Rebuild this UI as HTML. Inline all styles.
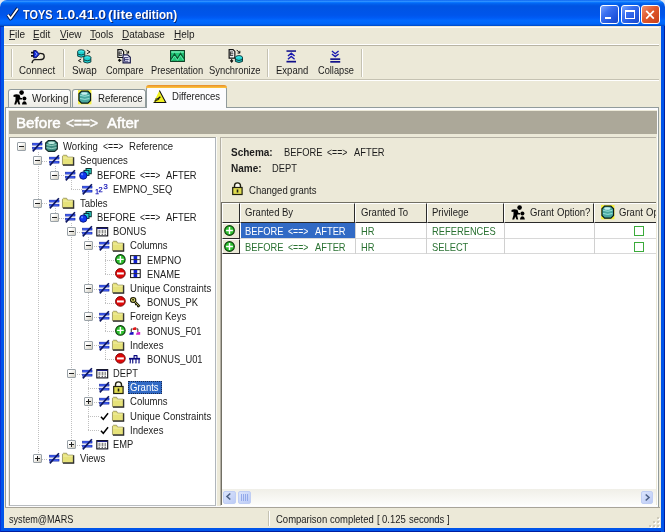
<!DOCTYPE html>
<html><head><meta charset="utf-8"><style>
*{margin:0;padding:0;box-sizing:border-box}
html,body{width:665px;height:532px;overflow:hidden;background:#dfe6f2}
body{position:relative;will-change:transform;font-family:"Liberation Sans",sans-serif;font-size:10px;color:#1c1c1c}
.a{position:absolute}
.t{position:absolute;white-space:pre;line-height:1}
svg.a{overflow:visible}
#title{left:0;top:0;width:665px;height:26.6px;border-radius:7px 7px 0 0;
 background:linear-gradient(to bottom,#0058ee 0%,#3593ff 4%,#288eff 6%,#127dff 8%,#036ffc 10%,#0262ee 14%,#0057e5 20%,#0054e3 24%,#0055eb 56%,#005bf5 66%,#026afe 76%,#0066fa 88%,#0058e0 93%,#0040b0 97%,#0030a0 100%)}
#frame{left:0;top:20px;width:665px;height:512px;background:#0055EA;border-left:1px solid #0831D9;border-right:1px solid #001EA0;border-bottom:1px solid #001EA0}
#client{left:4px;top:26px;width:657px;height:502px;background:#ECE9D8}
.cb{position:absolute;top:5px;width:19px;height:19px;border:1px solid #fff;border-radius:3px;
 background:linear-gradient(135deg,#7aa4ff 0%,#3a70f0 35%,#2258e0 70%,#1a48c8 100%)}
.cap{color:#fff;font-weight:bold;font-size:12.5px;text-shadow:1px 1px 0 #0a246a}
.sep{position:absolute;width:2px;border-left:1px solid #c5c2b2;border-right:1px solid #fff}
.tr{font-size:10px}
.dl{position:absolute;background:repeating-linear-gradient(to bottom,#c0c0c0 0 1px,transparent 1px 2px)}
.dh{position:absolute;height:1px;background:repeating-linear-gradient(to right,#c0c0c0 0 1px,transparent 1px 2px)}
.bx{position:absolute;width:9px;height:9px;border:1px solid #9aa2a8;border-radius:1px;background:linear-gradient(135deg,#fff 25%,#d0ccbe)}
</style></head><body>
<div id="frame" class="a"></div><div id="title" class="a"></div><div id="client" class="a"></div>
<svg class="a" style="left:6px;top:7px;width:13px;height:13px" viewBox="0 0 13 13"><path d="M1.8 7.8 L4.6 11.6 L11.8 1.4" stroke="#061440" stroke-width="3.6" fill="none" stroke-linejoin="round"/><path d="M1.8 7.8 L4.6 11.6 L11.8 1.4" stroke="#fff" stroke-width="1.8" fill="none" stroke-linejoin="round"/></svg>
<div class="t cap" style="left:23.3px;top:9px;font-size:12.8px;transform:scaleX(0.85);transform-origin:0 0">TOYS</div>
<div class="t cap" style="left:55.6px;top:9px;font-size:12.8px;transform:scaleX(1.08);transform-origin:0 0">1.0.41.0</div>
<div class="t cap" style="left:108px;top:9px;font-size:12.8px;transform:scaleX(1.09);transform-origin:0 0">(lite</div>
<div class="t cap" style="left:134.6px;top:9px;font-size:12.8px;transform:scaleX(0.91);transform-origin:0 0">edition)</div>
<div class="cb" style="left:600px"></div><div class="cb" style="left:621px"></div>
<div class="cb" style="left:641px;background:linear-gradient(135deg,#f09070 0%,#e0582c 45%,#c8401a 100%)"></div>
<div class="a" style="left:605px;top:16.8px;width:6px;height:2.6px;background:#fff"></div>
<div class="a" style="left:625px;top:9.6px;width:10px;height:9.8px;border:1.2px solid #fff;border-top:2.4px solid #fff"></div>
<svg class="a" style="left:645px;top:10px;width:10px;height:9.5px" viewBox="0 0 10 10"><path d="M1 1 L9 9 M9 1 L1 9" stroke="#fff" stroke-width="1.8"/></svg>
<div class="a" style="left:4px;top:26.6px;width:657px;height:1px;background:#fbfaf6"></div>
<div class="a" style="left:4px;top:44.2px;width:657px;height:1px;background:#fff"></div>
<div class="a" style="left:4px;top:45.3px;width:657px;height:1px;background:#b8b4a4"></div>
<div class="t" style="left:9px;top:30px">File</div>
<div class="a" style="left:9.3px;top:39.2px;width:5.5px;height:1px;background:#303030"></div>
<div class="t" style="left:33px;top:30px">Edit</div>
<div class="a" style="left:33.3px;top:39.2px;width:6px;height:1px;background:#303030"></div>
<div class="t" style="left:60px;top:30px">View</div>
<div class="a" style="left:60.3px;top:39.2px;width:6.5px;height:1px;background:#303030"></div>
<div class="t" style="left:90px;top:30px">Tools</div>
<div class="a" style="left:90.3px;top:39.2px;width:6px;height:1px;background:#303030"></div>
<div class="t" style="left:122px;top:30px">Database</div>
<div class="a" style="left:122.3px;top:39.2px;width:6.5px;height:1px;background:#303030"></div>
<div class="t" style="left:174px;top:30px">Help</div>
<div class="a" style="left:174.3px;top:39.2px;width:6.5px;height:1px;background:#303030"></div>
<div class="a" style="left:4px;top:79px;width:656px;height:1px;background:#c5c2b2"></div>
<div class="a" style="left:4px;top:80px;width:656px;height:1px;background:#fff"></div>
<div class="sep" style="left:11px;top:49px;height:28px"></div>
<div class="sep" style="left:63px;top:49px;height:28px"></div>
<div class="sep" style="left:267px;top:49px;height:28px"></div>
<div class="sep" style="left:361px;top:49px;height:28px"></div>
<div class="t" style="left:19.20px;top:65.66px;font-size:10.40px;transform:scaleX(0.9346);transform-origin:0 0">Connect</div>
<div class="t" style="left:71.70px;top:65.66px;font-size:10.40px;transform:scaleX(0.9519);transform-origin:0 0">Swap</div>
<div class="t" style="left:105.50px;top:65.66px;font-size:10.40px;transform:scaleX(0.8788);transform-origin:0 0">Compare</div>
<div class="t" style="left:151.20px;top:65.66px;font-size:10.40px;transform:scaleX(0.8923);transform-origin:0 0">Presentation</div>
<div class="t" style="left:209.40px;top:65.66px;font-size:10.40px;transform:scaleX(0.9019);transform-origin:0 0">Synchronize</div>
<div class="t" style="left:276.10px;top:65.66px;font-size:10.40px;transform:scaleX(0.9154);transform-origin:0 0">Expand</div>
<div class="t" style="left:317.50px;top:65.66px;font-size:10.40px;transform:scaleX(0.8875);transform-origin:0 0">Collapse</div>
<svg class="a" style="left:30.50px;top:50.20px;width:14px;height:14px" viewBox="0 0 14 14"><path d="M0 2.6 H3 M0 5.8 H3" stroke="#101010" stroke-width="1.7"/>
 <path d="M2.6 0.6 L5.2 0.6 L8.4 4.2 L5.2 7.8 L2.6 7.8 Z" fill="#1028d8" stroke="#06064a" stroke-width="0.9"/>
 <path d="M4.2 2.4 L6.2 4.2 L4.2 6" stroke="#a8c0ff" stroke-width="0.9" fill="none"/>
 <path d="M8.2 3.4 Q13.2 3 13.2 6.4 Q13.2 9.6 8.6 9.6 L3.6 9.6 Q1.6 9.9 1 13.2" stroke="#181818" stroke-width="1.4" fill="none"/></svg>
<svg class="a" style="left:76.50px;top:49.00px;width:15px;height:15.2px" viewBox="0 0 16 16"><g stroke="#0a3030" stroke-width="0.9">
 <ellipse cx="4.5" cy="2.7" rx="3.8" ry="2" fill="#40f0f0"/>
 <path d="M0.7 2.7 V7.5 Q4.5 9.8 8.3 7.5 V2.7" fill="#20d0d0"/>
 <path d="M0.7 5.2 Q4.5 7.4 8.3 5.2" fill="none"/>
 <ellipse cx="11" cy="9" rx="3.8" ry="2" fill="#40f0f0"/>
 <path d="M7.2 9 V13.8 Q11 16 14.8 13.8 V9" fill="#20d0d0"/>
 <path d="M7.2 11.4 Q11 13.6 14.8 11.4" fill="none"/>
 </g>
 <path d="M10.5 1 L14 3 L10.5 5" stroke="#101010" stroke-width="1" fill="none"/>
 <path d="M4.5 10.5 L1.5 12.3 L4.5 14" stroke="#101010" stroke-width="1" fill="none"/></svg>
<svg class="a" style="left:116.50px;top:49.30px;width:15px;height:14.5px" viewBox="0 0 16 16"><path d="M0.7 0.7 H5 L7 2.7 V9.4 H0.7 Z" fill="#fff" stroke="#101010" stroke-width="1.3"/>
 <path d="M2 3.3 H5.2 M2 5.3 H5.4 M2 7.3 H5.2 M2 3 V7.6" stroke="#202020" stroke-width="1"/>
 <path d="M6.4 6.4 H11.5 L14.4 9.2 V15.4 H6.4 Z" fill="#f0f0ff" stroke="#18184a" stroke-width="1.3"/>
 <path d="M8 9.5 H12.4 M8 11.5 H12.6 M8 13.5 H12.2 M8 9.3 V13.8" stroke="#2a2a6a" stroke-width="1"/>
 <path d="M9 1 L12.5 4.5 M12.5 2 V4.5 H10" stroke="#101010" stroke-width="1.1" fill="none"/>
 <path d="M4.5 12.5 H1.5 M3 11 L1.5 12.5 L3 14" stroke="#101010" stroke-width="1.3" fill="none"/></svg>
<svg class="a" style="left:170.00px;top:50.30px;width:15px;height:12px" viewBox="0 0 15 12"><rect x="0.6" y="0.6" width="13.8" height="10.8" fill="#20c878" stroke="#0a3a20" stroke-width="1.1"/>
 <rect x="1.2" y="1.2" width="12.6" height="1.6" fill="#70e8b0"/>
 <path d="M1 9.5 L4.5 4 L7.5 8.5 L10.5 3.5 L14 8.5" stroke="#0a5a30" stroke-width="1.3" fill="none"/>
 <path d="M1.5 10.5 L4.5 6 L7.5 10.3 L10.5 5.5 L13.5 10.3" stroke="#80f0c0" stroke-width="0.7" fill="none"/></svg>
<svg class="a" style="left:227.50px;top:49.30px;width:15.5px;height:14.5px" viewBox="0 0 16 16"><path d="M0.7 0.7 H5 L7 2.7 V10 H0.7 Z" fill="#fff" stroke="#101010" stroke-width="1.3"/>
 <path d="M2 3.3 H5.2 M2 5.3 H5.4 M2 7.3 H5.2 M2 3 V7.6" stroke="#202020" stroke-width="1"/>
 <path d="M9 1 L12.5 4.5 M12.5 2 V4.5 H10" stroke="#101010" stroke-width="1.1" fill="none"/>
 <path d="M3.5 11 V13.5 M2 12.5 L3.5 14.5 L5 12.5" stroke="#101010" stroke-width="1.2" fill="none"/>
 <g stroke="#062a2a" stroke-width="1">
 <ellipse cx="11.5" cy="9.3" rx="3.9" ry="2" fill="#40f0f0"/>
 <path d="M7.6 9.3 V13.8 Q11.5 16 15.4 13.8 V9.3" fill="#20d0d0"/>
 <path d="M7.6 11.6 Q11.5 13.7 15.4 11.6" fill="none"/>
 </g></svg>
<svg class="a" style="left:285.80px;top:50.00px;width:10.5px;height:13px" viewBox="0 0 11 13"><rect x="0.5" y="0" width="10" height="1.6" fill="#10108a"/>
 <rect x="0.5" y="11" width="10" height="1.8" fill="#10108a"/>
 <path d="M2 6 L5.5 3 L9 6 M2 9.5 L5.5 6.5 L9 9.5" stroke="#1818b0" stroke-width="1.4" fill="none"/></svg>
<svg class="a" style="left:329.60px;top:50.00px;width:10.5px;height:13px" viewBox="0 0 11 13"><rect x="0.3" y="8.4" width="10.4" height="1.7" fill="#10108a"/>
 <rect x="0.3" y="11.2" width="10.4" height="1.8" fill="#10108a"/>
 <path d="M2 0.8 L5.5 3.6 L9 0.8 M2 3.8 L5.5 6.6 L9 3.8" stroke="#1818b0" stroke-width="1.4" fill="none"/></svg>
<div class="a" style="left:5px;top:107px;width:654px;height:401px;border:1px solid #919b9c;background:#fcfcfe"></div>
<div class="a" style="left:8px;top:110px;width:649px;height:396px;background:#ECE9D8"></div>
<div class="a" style="left:8px;top:88.6px;width:63px;height:18.4px;border:1px solid #919b9c;border-bottom:none;border-radius:3px 3px 0 0;background:linear-gradient(#fff,#ecebe5)"></div>
<div class="a" style="left:72px;top:88.6px;width:74px;height:18.4px;border:1px solid #919b9c;border-bottom:none;border-radius:3px 3px 0 0;background:linear-gradient(#fff,#ecebe5)"></div>
<div class="a" style="left:146px;top:86px;width:81px;height:22px;border:1px solid #919b9c;border-bottom:none;border-radius:3px 3px 0 0;background:#fcfcfe"></div>
<div class="a" style="left:146px;top:85.4px;width:81px;height:3px;border-radius:3px 3px 0 0;background:linear-gradient(#e68b2c,#ffc83c)"></div>
<svg class="a" style="left:13.00px;top:90.00px;width:14px;height:15px" viewBox="0 0 14 15"><circle cx="8.6" cy="2.6" r="2.3" fill="#000"/>
 <path d="M0.5 5 Q3 3.8 6.5 4.8 L7.5 8 H9 V9.5 H6.5 L6.2 10.5 L7.2 14.5 H5.5 L4.2 11.5 L3.2 14.5 H1.2 L2.5 10 V6.8 L0.6 7 Z" fill="#000"/>
 <circle cx="11.4" cy="8.6" r="2" fill="#000"/>
 <path d="M9 14.5 Q9.2 11.5 11.4 11.3 Q13.6 11.5 13.8 14.5 Z" fill="#000"/></svg>
<svg class="a" style="left:77.80px;top:90.30px;width:13.5px;height:14.3px" viewBox="0 0 15 16"><rect x="0" y="0" width="15" height="16" fill="#f4f040"/>
 <path d="M4 1.3 H11 L14 4.3 V11.7 L11 14.7 H4 L1 11.7 V4.3 Z" fill="#48a8a0" stroke="#0a1a1a" stroke-width="1.3"/>
 <path d="M2.3 6 Q7.5 8 12.7 6 M2.3 9.5 Q7.5 11.5 12.7 9.5" stroke="#b0f0e8" stroke-width="0.9" fill="none"/>
 <ellipse cx="7" cy="3.8" rx="3.5" ry="1.4" fill="#c8f0f0"/></svg>
<svg class="a" style="left:153.00px;top:89.50px;width:13.8px;height:13.3px" viewBox="0 0 14 14"><path d="M6.5 0.5 L13.2 13.2 L0.3 13.2 Z" fill="#f0f020"/>
 <path d="M6.5 0.5 L13.2 13.2 L0.3 13.2" stroke="#101010" stroke-width="1.1" fill="none"/>
 <path d="M1.5 12 L7.5 7" stroke="#101010" stroke-width="1.4"/>
 <rect x="2.2" y="8.8" width="3" height="2.2" fill="#505020"/>
 <circle cx="5.5" cy="9.3" r="1" fill="#101010"/></svg>
<div class="t" style="left:31.60px;top:93.66px;font-size:10.40px;transform:scaleX(0.9615);transform-origin:0 0">Working</div>
<div class="t" style="left:97.60px;top:93.66px;font-size:10.40px;transform:scaleX(0.9317);transform-origin:0 0">Reference</div>
<div class="t" style="left:172.00px;top:91.66px;font-size:10.40px;transform:scaleX(0.9192);transform-origin:0 0">Differences</div>
<div class="a" style="left:8.5px;top:110.6px;width:648px;height:23.8px;background:#ACA899"></div>
<div class="t" style="left:15.6px;top:115.6px;font-size:14.6px;color:#fff;-webkit-text-stroke:0.5px #fff;transform:scaleX(1.04);transform-origin:0 0">Before</div>
<div class="t" style="left:66.4px;top:115.6px;font-size:14.6px;color:#fff;-webkit-text-stroke:0.5px #fff;transform:scaleX(0.94);transform-origin:0 0">&lt;==&gt;</div>
<div class="t" style="left:107px;top:115.6px;font-size:14.6px;color:#fff;-webkit-text-stroke:0.5px #fff;transform:scaleX(1.03);transform-origin:0 0">After</div>
<div class="a" style="left:9px;top:137px;width:206.5px;height:369px;border:1px solid #a0a09a;border-right-color:#b0b6bc;border-bottom-color:#b8bcc0;background:#fff"></div>
<div class="a" style="left:215.5px;top:137px;width:1px;height:369px;background:#fafaf6"></div>
<div class="dl" style="left:37.8px;top:151.7px;width:1px;height:307.0px"></div>
<div class="dl" style="left:54.6px;top:165.9px;width:1px;height:9.2px"></div>
<div class="dh" style="left:37.8px;top:160.9px;width:10.7px"></div>
<div class="dl" style="left:71.4px;top:180.1px;width:1px;height:9.2px"></div>
<div class="dh" style="left:54.6px;top:175.1px;width:10.7px"></div>
<div class="dh" style="left:71.4px;top:189.2px;width:10.7px"></div>
<div class="dl" style="left:54.6px;top:208.4px;width:1px;height:9.2px"></div>
<div class="dh" style="left:37.8px;top:203.4px;width:10.7px"></div>
<div class="dl" style="left:71.4px;top:222.6px;width:1px;height:221.9px"></div>
<div class="dh" style="left:54.6px;top:217.6px;width:10.7px"></div>
<div class="dl" style="left:88.2px;top:236.8px;width:1px;height:108.4px"></div>
<div class="dh" style="left:71.4px;top:231.8px;width:10.7px"></div>
<div class="dl" style="left:105.0px;top:251.0px;width:1px;height:23.4px"></div>
<div class="dh" style="left:88.2px;top:246.0px;width:10.7px"></div>
<div class="dh" style="left:105.0px;top:260.1px;width:10.7px"></div>
<div class="dh" style="left:105.0px;top:274.3px;width:10.7px"></div>
<div class="dl" style="left:105.0px;top:293.5px;width:1px;height:9.2px"></div>
<div class="dh" style="left:88.2px;top:288.5px;width:10.7px"></div>
<div class="dh" style="left:105.0px;top:302.7px;width:10.7px"></div>
<div class="dl" style="left:105.0px;top:321.9px;width:1px;height:9.2px"></div>
<div class="dh" style="left:88.2px;top:316.9px;width:10.7px"></div>
<div class="dh" style="left:105.0px;top:331.0px;width:10.7px"></div>
<div class="dl" style="left:105.0px;top:350.2px;width:1px;height:9.2px"></div>
<div class="dh" style="left:88.2px;top:345.2px;width:10.7px"></div>
<div class="dh" style="left:105.0px;top:359.4px;width:10.7px"></div>
<div class="dl" style="left:88.2px;top:378.6px;width:1px;height:51.7px"></div>
<div class="dh" style="left:71.4px;top:373.6px;width:10.7px"></div>
<div class="dh" style="left:88.2px;top:387.8px;width:10.7px"></div>
<div class="dh" style="left:88.2px;top:401.9px;width:10.7px"></div>
<div class="dh" style="left:88.2px;top:416.1px;width:10.7px"></div>
<div class="dh" style="left:88.2px;top:430.3px;width:10.7px"></div>
<div class="dh" style="left:71.4px;top:444.5px;width:10.7px"></div>
<div class="dh" style="left:37.8px;top:458.7px;width:10.7px"></div>
<div class="bx" style="left:16.60px;top:142.20px"></div>
<div class="a" style="left:18.60px;top:146.20px;width:5px;height:1px;background:#202020"></div>
<svg class="a" style="left:31.70px;top:141.20px;width:10.5px;height:10.5px" viewBox="0 0 12 12"><rect x="0.5" y="2.4" width="11" height="2.3" fill="#1838e8" stroke="#0a1a90" stroke-width="0.5"/>
 <rect x="1.2" y="3.2" width="9.6" height="0.6" fill="#8aa0ff"/>
 <rect x="0.5" y="7" width="11" height="2.3" fill="#1838e8" stroke="#0a1a90" stroke-width="0.5"/>
 <rect x="1.2" y="7.8" width="9.6" height="0.6" fill="#8aa0ff"/>
 <path d="M11.3 0.3 L0.9 11.8" stroke="#0a1460" stroke-width="1.9"/></svg>
<svg class="a" style="left:44.90px;top:140.30px;width:13px;height:12px" viewBox="0 0 14 13"><path d="M3.5 0.7 H10.5 L13.3 3.2 V9.8 L10.5 12.3 H3.5 L0.7 9.8 V3.2 Z" fill="#3c8c80" stroke="#142a28" stroke-width="1.3" stroke-linejoin="round"/>
 <path d="M1.6 5 Q7 7 12.4 5 M1.6 8.3 Q7 10.3 12.4 8.3" stroke="#a6dccc" stroke-width="1" fill="none"/>
 <ellipse cx="7" cy="3" rx="3.6" ry="1.4" fill="#c0ece0"/></svg>
<div class="t" style="left:63.00px;top:141.21px;font-size:10.70px;transform:scaleX(0.8925);transform-origin:0 0">Working</div><div class="t" style="left:102.55px;top:141.21px;font-size:10.70px;transform:scaleX(0.8131);transform-origin:0 0">&lt;==&gt;</div><div class="t" style="left:128.97px;top:141.21px;font-size:10.70px;transform:scaleX(0.8925);transform-origin:0 0">Reference</div>
<div class="bx" style="left:33.40px;top:156.38px"></div>
<div class="a" style="left:35.40px;top:160.38px;width:5px;height:1px;background:#202020"></div>
<svg class="a" style="left:48.50px;top:155.38px;width:10.5px;height:10.5px" viewBox="0 0 12 12"><rect x="0.5" y="2.4" width="11" height="2.3" fill="#1838e8" stroke="#0a1a90" stroke-width="0.5"/>
 <rect x="1.2" y="3.2" width="9.6" height="0.6" fill="#8aa0ff"/>
 <rect x="0.5" y="7" width="11" height="2.3" fill="#1838e8" stroke="#0a1a90" stroke-width="0.5"/>
 <rect x="1.2" y="7.8" width="9.6" height="0.6" fill="#8aa0ff"/>
 <path d="M11.3 0.3 L0.9 11.8" stroke="#0a1460" stroke-width="1.9"/></svg>
<svg class="a" style="left:61.70px;top:154.48px;width:13px;height:11.8px" viewBox="0 0 14 12"><path d="M0.5 2 L0.5 11 L12 11 L12 3 L6 3 L5 1 L1.5 1 Z" fill="#e6e27a" stroke="#8a8650" stroke-width="0.8"/>
 <path d="M12.6 3.2 L12.6 11.6 L1 11.6" stroke="#202020" stroke-width="1.2" fill="none"/>
 <path d="M1.3 4 L11.5 4" stroke="#f6f4b8" stroke-width="0.8"/></svg>
<div class="t" style="left:79.80px;top:155.39px;font-size:10.70px;transform:scaleX(0.8925);transform-origin:0 0">Sequences</div>
<div class="bx" style="left:50.20px;top:170.56px"></div>
<div class="a" style="left:52.20px;top:174.56px;width:5px;height:1px;background:#202020"></div>
<svg class="a" style="left:65.30px;top:169.56px;width:10.5px;height:10.5px" viewBox="0 0 12 12"><rect x="0.5" y="2.4" width="11" height="2.3" fill="#1838e8" stroke="#0a1a90" stroke-width="0.5"/>
 <rect x="1.2" y="3.2" width="9.6" height="0.6" fill="#8aa0ff"/>
 <rect x="0.5" y="7" width="11" height="2.3" fill="#1838e8" stroke="#0a1a90" stroke-width="0.5"/>
 <rect x="1.2" y="7.8" width="9.6" height="0.6" fill="#8aa0ff"/>
 <path d="M11.3 0.3 L0.9 11.8" stroke="#0a1460" stroke-width="1.9"/></svg>
<svg class="a" style="left:78.50px;top:168.26px;width:13px;height:12px" viewBox="0 0 14 13"><rect x="7.6" y="0.6" width="5.6" height="5.6" fill="#30e8d8" stroke="#062828" stroke-width="1.1"/>
 <rect x="5.4" y="2.6" width="5.4" height="5.4" fill="#28c8d0" stroke="#062838" stroke-width="1.1"/>
 <circle cx="4.6" cy="8.2" r="4" fill="#1038f0" stroke="#000a70" stroke-width="0.9"/>
 <circle cx="3.3" cy="6.9" r="1.2" fill="#6a90ff"/></svg>
<div class="t" style="left:96.60px;top:169.57px;font-size:10.70px;transform:scaleX(0.8738);transform-origin:0 0">BEFORE</div><div class="t" style="left:139.75px;top:169.57px;font-size:10.70px;transform:scaleX(0.8131);transform-origin:0 0">&lt;==&gt;</div><div class="t" style="left:166.17px;top:169.57px;font-size:10.70px;transform:scaleX(0.8738);transform-origin:0 0">AFTER</div>
<svg class="a" style="left:82.10px;top:183.74px;width:10.5px;height:10.5px" viewBox="0 0 12 12"><rect x="0.5" y="2.4" width="11" height="2.3" fill="#1838e8" stroke="#0a1a90" stroke-width="0.5"/>
 <rect x="1.2" y="3.2" width="9.6" height="0.6" fill="#8aa0ff"/>
 <rect x="0.5" y="7" width="11" height="2.3" fill="#1838e8" stroke="#0a1a90" stroke-width="0.5"/>
 <rect x="1.2" y="7.8" width="9.6" height="0.6" fill="#8aa0ff"/>
 <path d="M11.3 0.3 L0.9 11.8" stroke="#0a1460" stroke-width="1.9"/></svg>
<svg class="a" style="left:95.30px;top:182.24px;width:14px;height:14px" viewBox="0 0 14 14"><text x="0.2" y="12.2" font-family="Liberation Sans" font-size="6.6" fill="#1818b8" stroke="#1818b8" stroke-width="0.25">1</text>
 <text x="3.6" y="10.4" font-family="Liberation Sans" font-size="7.4" fill="#1818b8" stroke="#1818b8" stroke-width="0.25">2</text>
 <text x="8.4" y="6.9" font-family="Liberation Sans" font-size="7.6" fill="#1818b8" stroke="#1818b8" stroke-width="0.25">3</text></svg>
<div class="t" style="left:113.40px;top:183.75px;font-size:10.70px;transform:scaleX(0.8738);transform-origin:0 0">EMPNO_SEQ</div>
<div class="bx" style="left:33.40px;top:198.92px"></div>
<div class="a" style="left:35.40px;top:202.92px;width:5px;height:1px;background:#202020"></div>
<svg class="a" style="left:48.50px;top:197.92px;width:10.5px;height:10.5px" viewBox="0 0 12 12"><rect x="0.5" y="2.4" width="11" height="2.3" fill="#1838e8" stroke="#0a1a90" stroke-width="0.5"/>
 <rect x="1.2" y="3.2" width="9.6" height="0.6" fill="#8aa0ff"/>
 <rect x="0.5" y="7" width="11" height="2.3" fill="#1838e8" stroke="#0a1a90" stroke-width="0.5"/>
 <rect x="1.2" y="7.8" width="9.6" height="0.6" fill="#8aa0ff"/>
 <path d="M11.3 0.3 L0.9 11.8" stroke="#0a1460" stroke-width="1.9"/></svg>
<svg class="a" style="left:61.70px;top:197.02px;width:13px;height:11.8px" viewBox="0 0 14 12"><path d="M0.5 2 L0.5 11 L12 11 L12 3 L6 3 L5 1 L1.5 1 Z" fill="#e6e27a" stroke="#8a8650" stroke-width="0.8"/>
 <path d="M12.6 3.2 L12.6 11.6 L1 11.6" stroke="#202020" stroke-width="1.2" fill="none"/>
 <path d="M1.3 4 L11.5 4" stroke="#f6f4b8" stroke-width="0.8"/></svg>
<div class="t" style="left:79.80px;top:197.93px;font-size:10.70px;transform:scaleX(0.8925);transform-origin:0 0">Tables</div>
<div class="bx" style="left:50.20px;top:213.10px"></div>
<div class="a" style="left:52.20px;top:217.10px;width:5px;height:1px;background:#202020"></div>
<svg class="a" style="left:65.30px;top:212.10px;width:10.5px;height:10.5px" viewBox="0 0 12 12"><rect x="0.5" y="2.4" width="11" height="2.3" fill="#1838e8" stroke="#0a1a90" stroke-width="0.5"/>
 <rect x="1.2" y="3.2" width="9.6" height="0.6" fill="#8aa0ff"/>
 <rect x="0.5" y="7" width="11" height="2.3" fill="#1838e8" stroke="#0a1a90" stroke-width="0.5"/>
 <rect x="1.2" y="7.8" width="9.6" height="0.6" fill="#8aa0ff"/>
 <path d="M11.3 0.3 L0.9 11.8" stroke="#0a1460" stroke-width="1.9"/></svg>
<svg class="a" style="left:78.50px;top:210.80px;width:13px;height:12px" viewBox="0 0 14 13"><rect x="7.6" y="0.6" width="5.6" height="5.6" fill="#30e8d8" stroke="#062828" stroke-width="1.1"/>
 <rect x="5.4" y="2.6" width="5.4" height="5.4" fill="#28c8d0" stroke="#062838" stroke-width="1.1"/>
 <circle cx="4.6" cy="8.2" r="4" fill="#1038f0" stroke="#000a70" stroke-width="0.9"/>
 <circle cx="3.3" cy="6.9" r="1.2" fill="#6a90ff"/></svg>
<div class="t" style="left:96.60px;top:212.11px;font-size:10.70px;transform:scaleX(0.8738);transform-origin:0 0">BEFORE</div><div class="t" style="left:139.75px;top:212.11px;font-size:10.70px;transform:scaleX(0.8131);transform-origin:0 0">&lt;==&gt;</div><div class="t" style="left:166.17px;top:212.11px;font-size:10.70px;transform:scaleX(0.8738);transform-origin:0 0">AFTER</div>
<div class="bx" style="left:67.00px;top:227.28px"></div>
<div class="a" style="left:69.00px;top:231.28px;width:5px;height:1px;background:#202020"></div>
<svg class="a" style="left:82.10px;top:226.28px;width:10.5px;height:10.5px" viewBox="0 0 12 12"><rect x="0.5" y="2.4" width="11" height="2.3" fill="#1838e8" stroke="#0a1a90" stroke-width="0.5"/>
 <rect x="1.2" y="3.2" width="9.6" height="0.6" fill="#8aa0ff"/>
 <rect x="0.5" y="7" width="11" height="2.3" fill="#1838e8" stroke="#0a1a90" stroke-width="0.5"/>
 <rect x="1.2" y="7.8" width="9.6" height="0.6" fill="#8aa0ff"/>
 <path d="M11.3 0.3 L0.9 11.8" stroke="#0a1460" stroke-width="1.9"/></svg>
<svg class="a" style="left:95.80px;top:227.03px;width:12.5px;height:9.5px" viewBox="0 0 14 11"><rect x="0.7" y="0.7" width="12.6" height="9.6" fill="#fff" stroke="#101018" stroke-width="1.3"/>
 <rect x="1" y="1" width="12" height="1.3" fill="#1a1a80"/>
 <path d="M3.4 3.2 V7.4 M7 3.2 V7.4 M10.4 3.2 V7.4" stroke="#303030" stroke-width="0.9"/>
 <path d="M5 3.2 V7.4 M8.6 3.2 V7.4" stroke="#c8c8c0" stroke-width="1"/>
 <path d="M2.8 8.6 H4 M6.4 8.6 H7.6 M9.8 8.6 H11" stroke="#202020" stroke-width="1.1"/></svg>
<div class="t" style="left:113.40px;top:226.29px;font-size:10.70px;transform:scaleX(0.8738);transform-origin:0 0">BONUS</div>
<div class="bx" style="left:83.80px;top:241.46px"></div>
<div class="a" style="left:85.80px;top:245.46px;width:5px;height:1px;background:#202020"></div>
<svg class="a" style="left:98.90px;top:240.46px;width:10.5px;height:10.5px" viewBox="0 0 12 12"><rect x="0.5" y="2.4" width="11" height="2.3" fill="#1838e8" stroke="#0a1a90" stroke-width="0.5"/>
 <rect x="1.2" y="3.2" width="9.6" height="0.6" fill="#8aa0ff"/>
 <rect x="0.5" y="7" width="11" height="2.3" fill="#1838e8" stroke="#0a1a90" stroke-width="0.5"/>
 <rect x="1.2" y="7.8" width="9.6" height="0.6" fill="#8aa0ff"/>
 <path d="M11.3 0.3 L0.9 11.8" stroke="#0a1460" stroke-width="1.9"/></svg>
<svg class="a" style="left:112.10px;top:239.56px;width:13px;height:11.8px" viewBox="0 0 14 12"><path d="M0.5 2 L0.5 11 L12 11 L12 3 L6 3 L5 1 L1.5 1 Z" fill="#e6e27a" stroke="#8a8650" stroke-width="0.8"/>
 <path d="M12.6 3.2 L12.6 11.6 L1 11.6" stroke="#202020" stroke-width="1.2" fill="none"/>
 <path d="M1.3 4 L11.5 4" stroke="#f6f4b8" stroke-width="0.8"/></svg>
<div class="t" style="left:130.20px;top:240.47px;font-size:10.70px;transform:scaleX(0.8925);transform-origin:0 0">Columns</div>
<svg class="a" style="left:115.40px;top:253.94px;width:10.8px;height:10.8px" viewBox="0 0 12 12"><circle cx="6" cy="6" r="5.3" fill="#2cc02c" stroke="#0a3a0a" stroke-width="1.2"/>
 <path d="M6 2.3 V9.7 M2.3 6 H9.7" stroke="#fff" stroke-width="1.6"/></svg>
<svg class="a" style="left:130.20px;top:254.64px;width:10.8px;height:9.2px" viewBox="0 0 12 10"><rect x="0.6" y="0.6" width="10.8" height="8.8" fill="#fff" stroke="#202020" stroke-width="1.2"/>
 <rect x="4" y="1" width="4" height="8" fill="#1020d0"/>
 <path d="M1 5 H11" stroke="#303030" stroke-width="1"/></svg>
<div class="t" style="left:147.00px;top:254.65px;font-size:10.70px;transform:scaleX(0.8738);transform-origin:0 0">EMPNO</div>
<svg class="a" style="left:115.40px;top:268.12px;width:10.8px;height:10.8px" viewBox="0 0 12 12"><circle cx="6" cy="6" r="5.4" fill="#e00808" stroke="#700000" stroke-width="1"/>
 <rect x="2.2" y="4.9" width="7.6" height="2.3" fill="#fff"/></svg>
<svg class="a" style="left:130.20px;top:268.82px;width:10.8px;height:9.2px" viewBox="0 0 12 10"><rect x="0.6" y="0.6" width="10.8" height="8.8" fill="#fff" stroke="#202020" stroke-width="1.2"/>
 <rect x="4" y="1" width="4" height="8" fill="#1020d0"/>
 <path d="M1 5 H11" stroke="#303030" stroke-width="1"/></svg>
<div class="t" style="left:147.00px;top:268.83px;font-size:10.70px;transform:scaleX(0.8738);transform-origin:0 0">ENAME</div>
<div class="bx" style="left:83.80px;top:284.00px"></div>
<div class="a" style="left:85.80px;top:288.00px;width:5px;height:1px;background:#202020"></div>
<svg class="a" style="left:98.90px;top:283.00px;width:10.5px;height:10.5px" viewBox="0 0 12 12"><rect x="0.5" y="2.4" width="11" height="2.3" fill="#1838e8" stroke="#0a1a90" stroke-width="0.5"/>
 <rect x="1.2" y="3.2" width="9.6" height="0.6" fill="#8aa0ff"/>
 <rect x="0.5" y="7" width="11" height="2.3" fill="#1838e8" stroke="#0a1a90" stroke-width="0.5"/>
 <rect x="1.2" y="7.8" width="9.6" height="0.6" fill="#8aa0ff"/>
 <path d="M11.3 0.3 L0.9 11.8" stroke="#0a1460" stroke-width="1.9"/></svg>
<svg class="a" style="left:112.10px;top:282.10px;width:13px;height:11.8px" viewBox="0 0 14 12"><path d="M0.5 2 L0.5 11 L12 11 L12 3 L6 3 L5 1 L1.5 1 Z" fill="#e6e27a" stroke="#8a8650" stroke-width="0.8"/>
 <path d="M12.6 3.2 L12.6 11.6 L1 11.6" stroke="#202020" stroke-width="1.2" fill="none"/>
 <path d="M1.3 4 L11.5 4" stroke="#f6f4b8" stroke-width="0.8"/></svg>
<div class="t" style="left:130.20px;top:283.01px;font-size:10.70px;transform:scaleX(0.8925);transform-origin:0 0">Unique</div><div class="t" style="left:163.16px;top:283.01px;font-size:10.70px;transform:scaleX(0.8925);transform-origin:0 0">Constraints</div>
<svg class="a" style="left:115.40px;top:296.48px;width:10.8px;height:10.8px" viewBox="0 0 12 12"><circle cx="6" cy="6" r="5.4" fill="#e00808" stroke="#700000" stroke-width="1"/>
 <rect x="2.2" y="4.9" width="7.6" height="2.3" fill="#fff"/></svg>
<svg class="a" style="left:129.90px;top:296.98px;width:10.2px;height:10.2px" viewBox="0 0 10 10"><ellipse cx="3.1" cy="2.9" rx="2.6" ry="2.4" fill="#e4e070" stroke="#1a1a08" stroke-width="1.1"/>
 <circle cx="3" cy="2.7" r="0.9" fill="#1a1a08"/>
 <path d="M4.6 4.6 L9.4 9.4" stroke="#1a1a08" stroke-width="2.3"/>
 <path d="M4.8 4.8 L9 9" stroke="#e4e070" stroke-width="0.8"/>
 <rect x="5" y="6.6" width="1.5" height="1.5" fill="#1a1a08"/>
 <rect x="7" y="8.5" width="1.5" height="1.5" fill="#1a1a08"/></svg>
<div class="t" style="left:147.00px;top:297.19px;font-size:10.70px;transform:scaleX(0.8738);transform-origin:0 0">BONUS_PK</div>
<div class="bx" style="left:83.80px;top:312.36px"></div>
<div class="a" style="left:85.80px;top:316.36px;width:5px;height:1px;background:#202020"></div>
<svg class="a" style="left:98.90px;top:311.36px;width:10.5px;height:10.5px" viewBox="0 0 12 12"><rect x="0.5" y="2.4" width="11" height="2.3" fill="#1838e8" stroke="#0a1a90" stroke-width="0.5"/>
 <rect x="1.2" y="3.2" width="9.6" height="0.6" fill="#8aa0ff"/>
 <rect x="0.5" y="7" width="11" height="2.3" fill="#1838e8" stroke="#0a1a90" stroke-width="0.5"/>
 <rect x="1.2" y="7.8" width="9.6" height="0.6" fill="#8aa0ff"/>
 <path d="M11.3 0.3 L0.9 11.8" stroke="#0a1460" stroke-width="1.9"/></svg>
<svg class="a" style="left:112.10px;top:310.46px;width:13px;height:11.8px" viewBox="0 0 14 12"><path d="M0.5 2 L0.5 11 L12 11 L12 3 L6 3 L5 1 L1.5 1 Z" fill="#e6e27a" stroke="#8a8650" stroke-width="0.8"/>
 <path d="M12.6 3.2 L12.6 11.6 L1 11.6" stroke="#202020" stroke-width="1.2" fill="none"/>
 <path d="M1.3 4 L11.5 4" stroke="#f6f4b8" stroke-width="0.8"/></svg>
<div class="t" style="left:130.20px;top:311.37px;font-size:10.70px;transform:scaleX(0.8925);transform-origin:0 0">Foreign</div><div class="t" style="left:165.28px;top:311.37px;font-size:10.70px;transform:scaleX(0.8925);transform-origin:0 0">Keys</div>
<svg class="a" style="left:115.40px;top:324.84px;width:10.8px;height:10.8px" viewBox="0 0 12 12"><circle cx="6" cy="6" r="5.3" fill="#2cc02c" stroke="#0a3a0a" stroke-width="1.2"/>
 <path d="M6 2.3 V9.7 M2.3 6 H9.7" stroke="#fff" stroke-width="1.6"/></svg>
<svg class="a" style="left:129.30px;top:326.54px;width:11.6px;height:8.4px" viewBox="0 0 12 9"><path d="M3.6 2 H2.2 V5.5 M7.6 2 H9.3 V5.5" stroke="#202020" stroke-width="1" fill="none"/>
 <path d="M3.7 3.3 L4.2 1.2 Q5 0 7.5 0.3 V3.3 Z" fill="#e01818"/>
 <path d="M0 8.4 L0.7 6.2 Q1.8 5 4.7 5.3 V8.4 Z" fill="#1a10c0"/>
 <path d="M7.2 8.4 L7.9 6.2 Q9 5 11.8 5.3 V8.4 Z" fill="#d020c8"/></svg>
<div class="t" style="left:147.00px;top:325.55px;font-size:10.70px;transform:scaleX(0.8738);transform-origin:0 0">BONUS_F01</div>
<div class="bx" style="left:83.80px;top:340.72px"></div>
<div class="a" style="left:85.80px;top:344.72px;width:5px;height:1px;background:#202020"></div>
<svg class="a" style="left:98.90px;top:339.72px;width:10.5px;height:10.5px" viewBox="0 0 12 12"><rect x="0.5" y="2.4" width="11" height="2.3" fill="#1838e8" stroke="#0a1a90" stroke-width="0.5"/>
 <rect x="1.2" y="3.2" width="9.6" height="0.6" fill="#8aa0ff"/>
 <rect x="0.5" y="7" width="11" height="2.3" fill="#1838e8" stroke="#0a1a90" stroke-width="0.5"/>
 <rect x="1.2" y="7.8" width="9.6" height="0.6" fill="#8aa0ff"/>
 <path d="M11.3 0.3 L0.9 11.8" stroke="#0a1460" stroke-width="1.9"/></svg>
<svg class="a" style="left:112.10px;top:338.82px;width:13px;height:11.8px" viewBox="0 0 14 12"><path d="M0.5 2 L0.5 11 L12 11 L12 3 L6 3 L5 1 L1.5 1 Z" fill="#e6e27a" stroke="#8a8650" stroke-width="0.8"/>
 <path d="M12.6 3.2 L12.6 11.6 L1 11.6" stroke="#202020" stroke-width="1.2" fill="none"/>
 <path d="M1.3 4 L11.5 4" stroke="#f6f4b8" stroke-width="0.8"/></svg>
<div class="t" style="left:130.20px;top:339.73px;font-size:10.70px;transform:scaleX(0.8925);transform-origin:0 0">Indexes</div>
<svg class="a" style="left:115.40px;top:353.20px;width:10.8px;height:10.8px" viewBox="0 0 12 12"><circle cx="6" cy="6" r="5.4" fill="#e00808" stroke="#700000" stroke-width="1"/>
 <rect x="2.2" y="4.9" width="7.6" height="2.3" fill="#fff"/></svg>
<svg class="a" style="left:129.20px;top:354.80px;width:11.5px;height:8.6px" viewBox="0 0 12 9"><path d="M4.9 0.6 H8.7 M5.3 0.6 V3.5 M8.3 0.6 V3.5" stroke="#0a0a80" stroke-width="1.2" fill="none"/>
 <path d="M0 3.9 H11.6" stroke="#0a0a80" stroke-width="1.8"/>
 <path d="M1.3 4 V8.2 M3.9 4 V8.2 M7.3 4 V8.2 M10.5 4 V8.2" stroke="#0a0a80" stroke-width="1.2"/>
 <path d="M0.6 8.3 H1.8 M3.2 8.3 H4.4 M6.6 8.3 H7.8 M9.8 8.3 H11" stroke="#0a0a80" stroke-width="1"/></svg>
<div class="t" style="left:147.00px;top:353.91px;font-size:10.70px;transform:scaleX(0.8738);transform-origin:0 0">BONUS_U01</div>
<div class="bx" style="left:67.00px;top:369.08px"></div>
<div class="a" style="left:69.00px;top:373.08px;width:5px;height:1px;background:#202020"></div>
<svg class="a" style="left:82.10px;top:368.08px;width:10.5px;height:10.5px" viewBox="0 0 12 12"><rect x="0.5" y="2.4" width="11" height="2.3" fill="#1838e8" stroke="#0a1a90" stroke-width="0.5"/>
 <rect x="1.2" y="3.2" width="9.6" height="0.6" fill="#8aa0ff"/>
 <rect x="0.5" y="7" width="11" height="2.3" fill="#1838e8" stroke="#0a1a90" stroke-width="0.5"/>
 <rect x="1.2" y="7.8" width="9.6" height="0.6" fill="#8aa0ff"/>
 <path d="M11.3 0.3 L0.9 11.8" stroke="#0a1460" stroke-width="1.9"/></svg>
<svg class="a" style="left:95.80px;top:368.83px;width:12.5px;height:9.5px" viewBox="0 0 14 11"><rect x="0.7" y="0.7" width="12.6" height="9.6" fill="#fff" stroke="#101018" stroke-width="1.3"/>
 <rect x="1" y="1" width="12" height="1.3" fill="#1a1a80"/>
 <path d="M3.4 3.2 V7.4 M7 3.2 V7.4 M10.4 3.2 V7.4" stroke="#303030" stroke-width="0.9"/>
 <path d="M5 3.2 V7.4 M8.6 3.2 V7.4" stroke="#c8c8c0" stroke-width="1"/>
 <path d="M2.8 8.6 H4 M6.4 8.6 H7.6 M9.8 8.6 H11" stroke="#202020" stroke-width="1.1"/></svg>
<div class="t" style="left:113.40px;top:368.09px;font-size:10.70px;transform:scaleX(0.8738);transform-origin:0 0">DEPT</div>
<svg class="a" style="left:98.90px;top:382.26px;width:10.5px;height:10.5px" viewBox="0 0 12 12"><rect x="0.5" y="2.4" width="11" height="2.3" fill="#1838e8" stroke="#0a1a90" stroke-width="0.5"/>
 <rect x="1.2" y="3.2" width="9.6" height="0.6" fill="#8aa0ff"/>
 <rect x="0.5" y="7" width="11" height="2.3" fill="#1838e8" stroke="#0a1a90" stroke-width="0.5"/>
 <rect x="1.2" y="7.8" width="9.6" height="0.6" fill="#8aa0ff"/>
 <path d="M11.3 0.3 L0.9 11.8" stroke="#0a1460" stroke-width="1.9"/></svg>
<svg class="a" style="left:113.10px;top:381.26px;width:11px;height:13px" viewBox="0 0 11 13"><path d="M2.5 6 V3.8 Q2.5 0.9 5.5 0.9 Q8.5 0.9 8.5 3.8 V6" stroke="#202010" stroke-width="1.4" fill="#fdfcf0"/>
 <rect x="0.7" y="5.5" width="9.4" height="7" fill="#e0dc50" stroke="#202010" stroke-width="1.2"/>
 <rect x="4.7" y="7.5" width="1.6" height="3" fill="#202010"/></svg>
<div class="a" style="left:127.70px;top:380.66px;width:34px;height:13.8px;background:#316ac5;outline:1px dotted #1a2a50;outline-offset:-1px"></div>
<div class="t" style="left:130.20px;top:382.27px;font-size:10.70px;color:#fff;transform:scaleX(0.8925);transform-origin:0 0">Grants</div>
<div class="bx" style="left:83.80px;top:397.44px"></div>
<div class="a" style="left:85.80px;top:401.44px;width:5px;height:1px;background:#202020"></div>
<div class="a" style="left:87.80px;top:399.44px;width:1px;height:5px;background:#202020"></div>
<svg class="a" style="left:98.90px;top:396.44px;width:10.5px;height:10.5px" viewBox="0 0 12 12"><rect x="0.5" y="2.4" width="11" height="2.3" fill="#1838e8" stroke="#0a1a90" stroke-width="0.5"/>
 <rect x="1.2" y="3.2" width="9.6" height="0.6" fill="#8aa0ff"/>
 <rect x="0.5" y="7" width="11" height="2.3" fill="#1838e8" stroke="#0a1a90" stroke-width="0.5"/>
 <rect x="1.2" y="7.8" width="9.6" height="0.6" fill="#8aa0ff"/>
 <path d="M11.3 0.3 L0.9 11.8" stroke="#0a1460" stroke-width="1.9"/></svg>
<svg class="a" style="left:112.10px;top:395.54px;width:13px;height:11.8px" viewBox="0 0 14 12"><path d="M0.5 2 L0.5 11 L12 11 L12 3 L6 3 L5 1 L1.5 1 Z" fill="#e6e27a" stroke="#8a8650" stroke-width="0.8"/>
 <path d="M12.6 3.2 L12.6 11.6 L1 11.6" stroke="#202020" stroke-width="1.2" fill="none"/>
 <path d="M1.3 4 L11.5 4" stroke="#f6f4b8" stroke-width="0.8"/></svg>
<div class="t" style="left:130.20px;top:396.45px;font-size:10.70px;transform:scaleX(0.8925);transform-origin:0 0">Columns</div>
<svg class="a" style="left:99.90px;top:412.12px;width:9px;height:8.5px" viewBox="0 0 10 10"><path d="M0.8 5.5 L3.6 8.6 L9.2 1.5" stroke="#000" stroke-width="1.7" fill="none"/></svg>
<svg class="a" style="left:112.10px;top:409.72px;width:13px;height:11.8px" viewBox="0 0 14 12"><path d="M0.5 2 L0.5 11 L12 11 L12 3 L6 3 L5 1 L1.5 1 Z" fill="#e6e27a" stroke="#8a8650" stroke-width="0.8"/>
 <path d="M12.6 3.2 L12.6 11.6 L1 11.6" stroke="#202020" stroke-width="1.2" fill="none"/>
 <path d="M1.3 4 L11.5 4" stroke="#f6f4b8" stroke-width="0.8"/></svg>
<div class="t" style="left:130.20px;top:410.63px;font-size:10.70px;transform:scaleX(0.8925);transform-origin:0 0">Unique</div><div class="t" style="left:163.16px;top:410.63px;font-size:10.70px;transform:scaleX(0.8925);transform-origin:0 0">Constraints</div>
<svg class="a" style="left:99.90px;top:426.30px;width:9px;height:8.5px" viewBox="0 0 10 10"><path d="M0.8 5.5 L3.6 8.6 L9.2 1.5" stroke="#000" stroke-width="1.7" fill="none"/></svg>
<svg class="a" style="left:112.10px;top:423.90px;width:13px;height:11.8px" viewBox="0 0 14 12"><path d="M0.5 2 L0.5 11 L12 11 L12 3 L6 3 L5 1 L1.5 1 Z" fill="#e6e27a" stroke="#8a8650" stroke-width="0.8"/>
 <path d="M12.6 3.2 L12.6 11.6 L1 11.6" stroke="#202020" stroke-width="1.2" fill="none"/>
 <path d="M1.3 4 L11.5 4" stroke="#f6f4b8" stroke-width="0.8"/></svg>
<div class="t" style="left:130.20px;top:424.81px;font-size:10.70px;transform:scaleX(0.8925);transform-origin:0 0">Indexes</div>
<div class="bx" style="left:67.00px;top:439.98px"></div>
<div class="a" style="left:69.00px;top:443.98px;width:5px;height:1px;background:#202020"></div>
<div class="a" style="left:71.00px;top:441.98px;width:1px;height:5px;background:#202020"></div>
<svg class="a" style="left:82.10px;top:438.98px;width:10.5px;height:10.5px" viewBox="0 0 12 12"><rect x="0.5" y="2.4" width="11" height="2.3" fill="#1838e8" stroke="#0a1a90" stroke-width="0.5"/>
 <rect x="1.2" y="3.2" width="9.6" height="0.6" fill="#8aa0ff"/>
 <rect x="0.5" y="7" width="11" height="2.3" fill="#1838e8" stroke="#0a1a90" stroke-width="0.5"/>
 <rect x="1.2" y="7.8" width="9.6" height="0.6" fill="#8aa0ff"/>
 <path d="M11.3 0.3 L0.9 11.8" stroke="#0a1460" stroke-width="1.9"/></svg>
<svg class="a" style="left:95.80px;top:439.73px;width:12.5px;height:9.5px" viewBox="0 0 14 11"><rect x="0.7" y="0.7" width="12.6" height="9.6" fill="#fff" stroke="#101018" stroke-width="1.3"/>
 <rect x="1" y="1" width="12" height="1.3" fill="#1a1a80"/>
 <path d="M3.4 3.2 V7.4 M7 3.2 V7.4 M10.4 3.2 V7.4" stroke="#303030" stroke-width="0.9"/>
 <path d="M5 3.2 V7.4 M8.6 3.2 V7.4" stroke="#c8c8c0" stroke-width="1"/>
 <path d="M2.8 8.6 H4 M6.4 8.6 H7.6 M9.8 8.6 H11" stroke="#202020" stroke-width="1.1"/></svg>
<div class="t" style="left:113.40px;top:438.99px;font-size:10.70px;transform:scaleX(0.8738);transform-origin:0 0">EMP</div>
<div class="bx" style="left:33.40px;top:454.16px"></div>
<div class="a" style="left:35.40px;top:458.16px;width:5px;height:1px;background:#202020"></div>
<div class="a" style="left:37.40px;top:456.16px;width:1px;height:5px;background:#202020"></div>
<svg class="a" style="left:48.50px;top:453.16px;width:10.5px;height:10.5px" viewBox="0 0 12 12"><rect x="0.5" y="2.4" width="11" height="2.3" fill="#1838e8" stroke="#0a1a90" stroke-width="0.5"/>
 <rect x="1.2" y="3.2" width="9.6" height="0.6" fill="#8aa0ff"/>
 <rect x="0.5" y="7" width="11" height="2.3" fill="#1838e8" stroke="#0a1a90" stroke-width="0.5"/>
 <rect x="1.2" y="7.8" width="9.6" height="0.6" fill="#8aa0ff"/>
 <path d="M11.3 0.3 L0.9 11.8" stroke="#0a1460" stroke-width="1.9"/></svg>
<svg class="a" style="left:61.70px;top:452.26px;width:13px;height:11.8px" viewBox="0 0 14 12"><path d="M0.5 2 L0.5 11 L12 11 L12 3 L6 3 L5 1 L1.5 1 Z" fill="#e6e27a" stroke="#8a8650" stroke-width="0.8"/>
 <path d="M12.6 3.2 L12.6 11.6 L1 11.6" stroke="#202020" stroke-width="1.2" fill="none"/>
 <path d="M1.3 4 L11.5 4" stroke="#f6f4b8" stroke-width="0.8"/></svg>
<div class="t" style="left:79.80px;top:453.17px;font-size:10.70px;transform:scaleX(0.8925);transform-origin:0 0">Views</div>
<div class="a" style="left:220px;top:137px;width:437px;height:369px;border-left:1px solid #b4b0a4;border-top:1px solid #b4b0a4;border-right:1px solid #fff;border-bottom:1px solid #fff"></div>
<div class="a" style="left:221px;top:138px;width:1px;height:360px;background:#f6f5ee"></div>
<div class="t" style="left:231px;top:148px;font-weight:bold">Schema:</div>
<div class="t" style="left:284.00px;top:147.41px;font-size:10.70px;transform:scaleX(0.8738);transform-origin:0 0">BEFORE</div><div class="t" style="left:327.15px;top:147.41px;font-size:10.70px;transform:scaleX(0.8131);transform-origin:0 0">&lt;==&gt;</div><div class="t" style="left:353.57px;top:147.41px;font-size:10.70px;transform:scaleX(0.8738);transform-origin:0 0">AFTER</div>
<div class="t" style="left:231px;top:164px;font-weight:bold">Name:</div>
<div class="t" style="left:272.00px;top:163.41px;font-size:10.70px;transform:scaleX(0.8738);transform-origin:0 0">DEPT</div>
<svg class="a" style="left:232.00px;top:182.00px;width:11px;height:13px" viewBox="0 0 11 13"><path d="M2.5 6 V3.8 Q2.5 0.9 5.5 0.9 Q8.5 0.9 8.5 3.8 V6" stroke="#202010" stroke-width="1.4" fill="#fdfcf0"/>
 <rect x="0.7" y="5.5" width="9.4" height="7" fill="#e0dc50" stroke="#202010" stroke-width="1.2"/>
 <rect x="4.7" y="7.5" width="1.6" height="3" fill="#202010"/></svg>
<div class="t" style="left:249.00px;top:184.91px;font-size:10.70px;transform:scaleX(0.8925);transform-origin:0 0">Changed</div><div class="t" style="left:290.46px;top:184.91px;font-size:10.70px;transform:scaleX(0.8925);transform-origin:0 0">grants</div>
<div class="a" style="left:220.5px;top:201.5px;width:436.5px;height:303.5px;background:#fff;border-left:1px solid #716f64;border-top:1px solid #716f64"></div>
<div class="a" style="left:221.7px;top:202.6px;width:18.3px;height:20.5px;background:#ece9d8;border-left:1px solid #fff;border-top:1px solid #fff;border-right:1px solid #2a2a2a;border-bottom:1px solid #2a2a2a"></div>
<div class="a" style="left:240.0px;top:202.6px;width:115.0px;height:20.5px;background:#ece9d8;border-left:1px solid #fff;border-top:1px solid #fff;border-right:1px solid #2a2a2a;border-bottom:1px solid #2a2a2a"></div>
<div class="a" style="left:355.0px;top:202.6px;width:71.6px;height:20.5px;background:#ece9d8;border-left:1px solid #fff;border-top:1px solid #fff;border-right:1px solid #2a2a2a;border-bottom:1px solid #2a2a2a"></div>
<div class="a" style="left:426.6px;top:202.6px;width:77.7px;height:20.5px;background:#ece9d8;border-left:1px solid #fff;border-top:1px solid #fff;border-right:1px solid #2a2a2a;border-bottom:1px solid #2a2a2a"></div>
<div class="a" style="left:504.3px;top:202.6px;width:90.0px;height:20.5px;background:#ece9d8;border-left:1px solid #fff;border-top:1px solid #fff;border-right:1px solid #2a2a2a;border-bottom:1px solid #2a2a2a"></div>
<div class="a" style="left:594.3px;top:202.6px;width:62.7px;height:20.5px;background:#ece9d8;border-left:1px solid #fff;border-top:1px solid #fff;border-right:1px solid #2a2a2a;border-bottom:1px solid #2a2a2a"></div>
<div class="a" style="left:221.7px;top:223.1px;width:18.3px;height:15.9px;background:#ece9d8;border-left:1px solid #fff;border-top:1px solid #fff;border-right:1px solid #2a2a2a;border-bottom:1px solid #2a2a2a"></div>
<svg class="a" style="left:223.90px;top:224.60px;width:11px;height:11px" viewBox="0 0 12 12"><circle cx="6" cy="6" r="5.3" fill="#2cc02c" stroke="#0a3a0a" stroke-width="1.2"/>
 <path d="M6 2.3 V9.7 M2.3 6 H9.7" stroke="#fff" stroke-width="1.6"/></svg>
<div class="a" style="left:221.7px;top:239.0px;width:18.3px;height:15.1px;background:#ece9d8;border-left:1px solid #fff;border-top:1px solid #fff;border-right:1px solid #2a2a2a;border-bottom:1px solid #2a2a2a"></div>
<svg class="a" style="left:223.90px;top:240.50px;width:11px;height:11px" viewBox="0 0 12 12"><circle cx="6" cy="6" r="5.3" fill="#2cc02c" stroke="#0a3a0a" stroke-width="1.2"/>
 <path d="M6 2.3 V9.7 M2.3 6 H9.7" stroke="#fff" stroke-width="1.6"/></svg>
<div class="a" style="left:240.0px;top:238.0px;width:417.0px;height:1px;background:#d8d8d8"></div>
<div class="a" style="left:240.0px;top:253.1px;width:417.0px;height:1px;background:#d8d8d8"></div>
<div class="a" style="left:354.5px;top:223.1px;width:1px;height:31.0px;background:#d0d0d0"></div>
<div class="a" style="left:426.1px;top:223.1px;width:1px;height:31.0px;background:#d0d0d0"></div>
<div class="a" style="left:503.8px;top:223.1px;width:1px;height:31.0px;background:#d0d0d0"></div>
<div class="a" style="left:593.8px;top:223.1px;width:1px;height:31.0px;background:#d0d0d0"></div>
<div class="a" style="left:240.5px;top:223.3px;width:114px;height:14.6px;background:#316ac5"></div>
<div class="t" style="left:245.00px;top:207.21px;font-size:10.70px;transform:scaleX(0.8925);transform-origin:0 0">Granted</div><div class="t" style="left:282.21px;top:207.21px;font-size:10.70px;transform:scaleX(0.8925);transform-origin:0 0">By</div>
<div class="t" style="left:360.50px;top:207.21px;font-size:10.70px;transform:scaleX(0.8925);transform-origin:0 0">Granted</div><div class="t" style="left:397.71px;top:207.21px;font-size:10.70px;transform:scaleX(0.8925);transform-origin:0 0">To</div>
<div class="t" style="left:432.00px;top:207.21px;font-size:10.70px;transform:scaleX(0.8925);transform-origin:0 0">Privilege</div>
<div class="t" style="left:530.00px;top:207.21px;font-size:10.70px;transform:scaleX(0.8925);transform-origin:0 0">Grant</div><div class="t" style="left:556.58px;top:207.21px;font-size:10.70px;transform:scaleX(0.8925);transform-origin:0 0">Option?</div>
<div class="t" style="left:619.00px;top:207.21px;font-size:10.70px;transform:scaleX(0.8925);transform-origin:0 0">Grant</div><div class="t" style="left:645.58px;top:207.21px;font-size:10.70px;transform:scaleX(0.8925);transform-origin:0 0">Option</div>
<svg class="a" style="left:511.00px;top:205.00px;width:14px;height:15px" viewBox="0 0 14 15"><circle cx="8.6" cy="2.6" r="2.3" fill="#000"/>
 <path d="M0.5 5 Q3 3.8 6.5 4.8 L7.5 8 H9 V9.5 H6.5 L6.2 10.5 L7.2 14.5 H5.5 L4.2 11.5 L3.2 14.5 H1.2 L2.5 10 V6.8 L0.6 7 Z" fill="#000"/>
 <circle cx="11.4" cy="8.6" r="2" fill="#000"/>
 <path d="M9 14.5 Q9.2 11.5 11.4 11.3 Q13.6 11.5 13.8 14.5 Z" fill="#000"/></svg>
<svg class="a" style="left:600.50px;top:205.00px;width:13.5px;height:14.3px" viewBox="0 0 15 16"><rect x="0" y="0" width="15" height="16" fill="#f4f040"/>
 <path d="M4 1.3 H11 L14 4.3 V11.7 L11 14.7 H4 L1 11.7 V4.3 Z" fill="#48a8a0" stroke="#0a1a1a" stroke-width="1.3"/>
 <path d="M2.3 6 Q7.5 8 12.7 6 M2.3 9.5 Q7.5 11.5 12.7 9.5" stroke="#b0f0e8" stroke-width="0.9" fill="none"/>
 <ellipse cx="7" cy="3.8" rx="3.5" ry="1.4" fill="#c8f0f0"/></svg>
<div class="t" style="left:245.00px;top:225.91px;font-size:10.70px;color:#fff;transform:scaleX(0.8738);transform-origin:0 0">BEFORE</div><div class="t" style="left:288.15px;top:225.91px;font-size:10.70px;color:#fff;transform:scaleX(0.8131);transform-origin:0 0">&lt;==&gt;</div><div class="t" style="left:314.57px;top:225.91px;font-size:10.70px;color:#fff;transform:scaleX(0.8738);transform-origin:0 0">AFTER</div>
<div class="t" style="left:360.50px;top:225.91px;font-size:10.70px;color:#2a7232;transform:scaleX(0.8738);transform-origin:0 0">HR</div>
<div class="t" style="left:432.00px;top:225.91px;font-size:10.70px;color:#2a7232;transform:scaleX(0.8738);transform-origin:0 0">REFERENCES</div>
<div class="a" style="left:634px;top:225.6px;width:10px;height:10px;border:1px solid #3aaa3a;background:#fff"></div>
<div class="t" style="left:245.00px;top:241.81px;font-size:10.70px;color:#2a7232;transform:scaleX(0.8738);transform-origin:0 0">BEFORE</div><div class="t" style="left:288.15px;top:241.81px;font-size:10.70px;color:#2a7232;transform:scaleX(0.8131);transform-origin:0 0">&lt;==&gt;</div><div class="t" style="left:314.57px;top:241.81px;font-size:10.70px;color:#2a7232;transform:scaleX(0.8738);transform-origin:0 0">AFTER</div>
<div class="t" style="left:360.50px;top:241.81px;font-size:10.70px;color:#2a7232;transform:scaleX(0.8738);transform-origin:0 0">HR</div>
<div class="t" style="left:432.00px;top:241.81px;font-size:10.70px;color:#2a7232;transform:scaleX(0.8738);transform-origin:0 0">SELECT</div>
<div class="a" style="left:634px;top:241.5px;width:10px;height:10px;border:1px solid #3aaa3a;background:#fff"></div>
<div class="a" style="left:655.5px;top:137px;width:1.5px;height:369px;background:#ece9d8"></div>
<div class="a" style="left:656.5px;top:137px;width:1px;height:369px;background:#fff"></div>
<div class="a" style="left:657.5px;top:107px;width:1px;height:401px;background:#919b9c"></div>
<div class="a" style="left:658.5px;top:27px;width:2.5px;height:501px;background:#ECE9D8"></div>
<div class="a" style="left:661px;top:26px;width:4px;height:506px;background:#0055EA;border-right:1px solid #001EA0"></div>
<div class="a" style="left:221.7px;top:489px;width:434px;height:16px;background:linear-gradient(#f0efe8,#fdfdfb)"></div>
<div class="a" style="left:222.8px;top:490.6px;width:13px;height:13.6px;border:1px solid #c0cef4;border-radius:2px;background:linear-gradient(135deg,#dbe5fd,#bccbf5)"></div>
<div class="a" style="left:237.6px;top:490.6px;width:13.5px;height:13.6px;border:1px solid #c0cef4;border-radius:2px;background:linear-gradient(135deg,#dbe5fd,#bccbf5)"></div>
<div class="a" style="left:641.2px;top:490.6px;width:12px;height:13.6px;border:1px solid #c0cef4;border-radius:2px;background:linear-gradient(135deg,#dbe5fd,#bccbf5)"></div>
<svg class="a" style="left:225.5px;top:493px;width:5px;height:7px" viewBox="0 0 5 7"><path d="M4.3 0.5 L1 3.5 L4.3 6.5" stroke="#4d6185" stroke-width="1.6" fill="none"/></svg>
<svg class="a" style="left:645px;top:493.5px;width:5px;height:7px" viewBox="0 0 5 7"><path d="M0.7 0.5 L4 3.5 L0.7 6.5" stroke="#4d6185" stroke-width="1.6" fill="none"/></svg>
<svg class="a" style="left:241px;top:494px;width:7px;height:7px" viewBox="0 0 7 7"><path d="M0.5 0 V7 M2.5 0 V7 M4.5 0 V7 M6.5 0 V7" stroke="#8ca4e8" stroke-width="0.9"/></svg>
<div class="a" style="left:221px;top:505.2px;width:436px;height:1px;background:#fff"></div>
<div class="a" style="left:5px;top:507.3px;width:655px;height:1px;background:#a8a498"></div>
<div class="a" style="left:4px;top:508.3px;width:657px;height:19.5px;background:#ECE9D8"></div>
<div class="t" style="left:8.60px;top:514.96px;font-size:10.40px;transform:scaleX(0.8750);transform-origin:0 0">system@MARS</div>
<div class="a" style="left:268.4px;top:511.3px;width:1px;height:15px;background:#c5c2b2"></div>
<div class="a" style="left:269.4px;top:511.3px;width:1px;height:15px;background:#fff"></div>
<div class="t" style="left:276.10px;top:514.96px;font-size:10.40px;transform:scaleX(0.9135);transform-origin:0 0">Comparison</div><div class="t" style="left:330.17px;top:514.96px;font-size:10.40px;transform:scaleX(0.9135);transform-origin:0 0">completed</div><div class="t" style="left:376.85px;top:514.96px;font-size:10.40px;transform:scaleX(0.9135);transform-origin:0 0">[</div><div class="t" style="left:382.34px;top:514.96px;font-size:10.40px;transform:scaleX(0.9135);transform-origin:0 0">0.125</div><div class="t" style="left:408.96px;top:514.96px;font-size:10.40px;transform:scaleX(0.9135);transform-origin:0 0">seconds</div><div class="t" style="left:447.19px;top:514.96px;font-size:10.40px;transform:scaleX(0.9135);transform-origin:0 0">]</div>
<div class="a" style="left:657px;top:517px;width:1.6px;height:1.6px;background:#cfcbbb;box-shadow:1px 1px 0 #fff"></div>
<div class="a" style="left:657px;top:521px;width:1.6px;height:1.6px;background:#cfcbbb;box-shadow:1px 1px 0 #fff"></div>
<div class="a" style="left:657px;top:525px;width:1.6px;height:1.6px;background:#cfcbbb;box-shadow:1px 1px 0 #fff"></div>
<div class="a" style="left:653px;top:521px;width:1.6px;height:1.6px;background:#cfcbbb;box-shadow:1px 1px 0 #fff"></div>
<div class="a" style="left:653px;top:525px;width:1.6px;height:1.6px;background:#cfcbbb;box-shadow:1px 1px 0 #fff"></div>
<div class="a" style="left:649px;top:525px;width:1.6px;height:1.6px;background:#cfcbbb;box-shadow:1px 1px 0 #fff"></div>
</body></html>
